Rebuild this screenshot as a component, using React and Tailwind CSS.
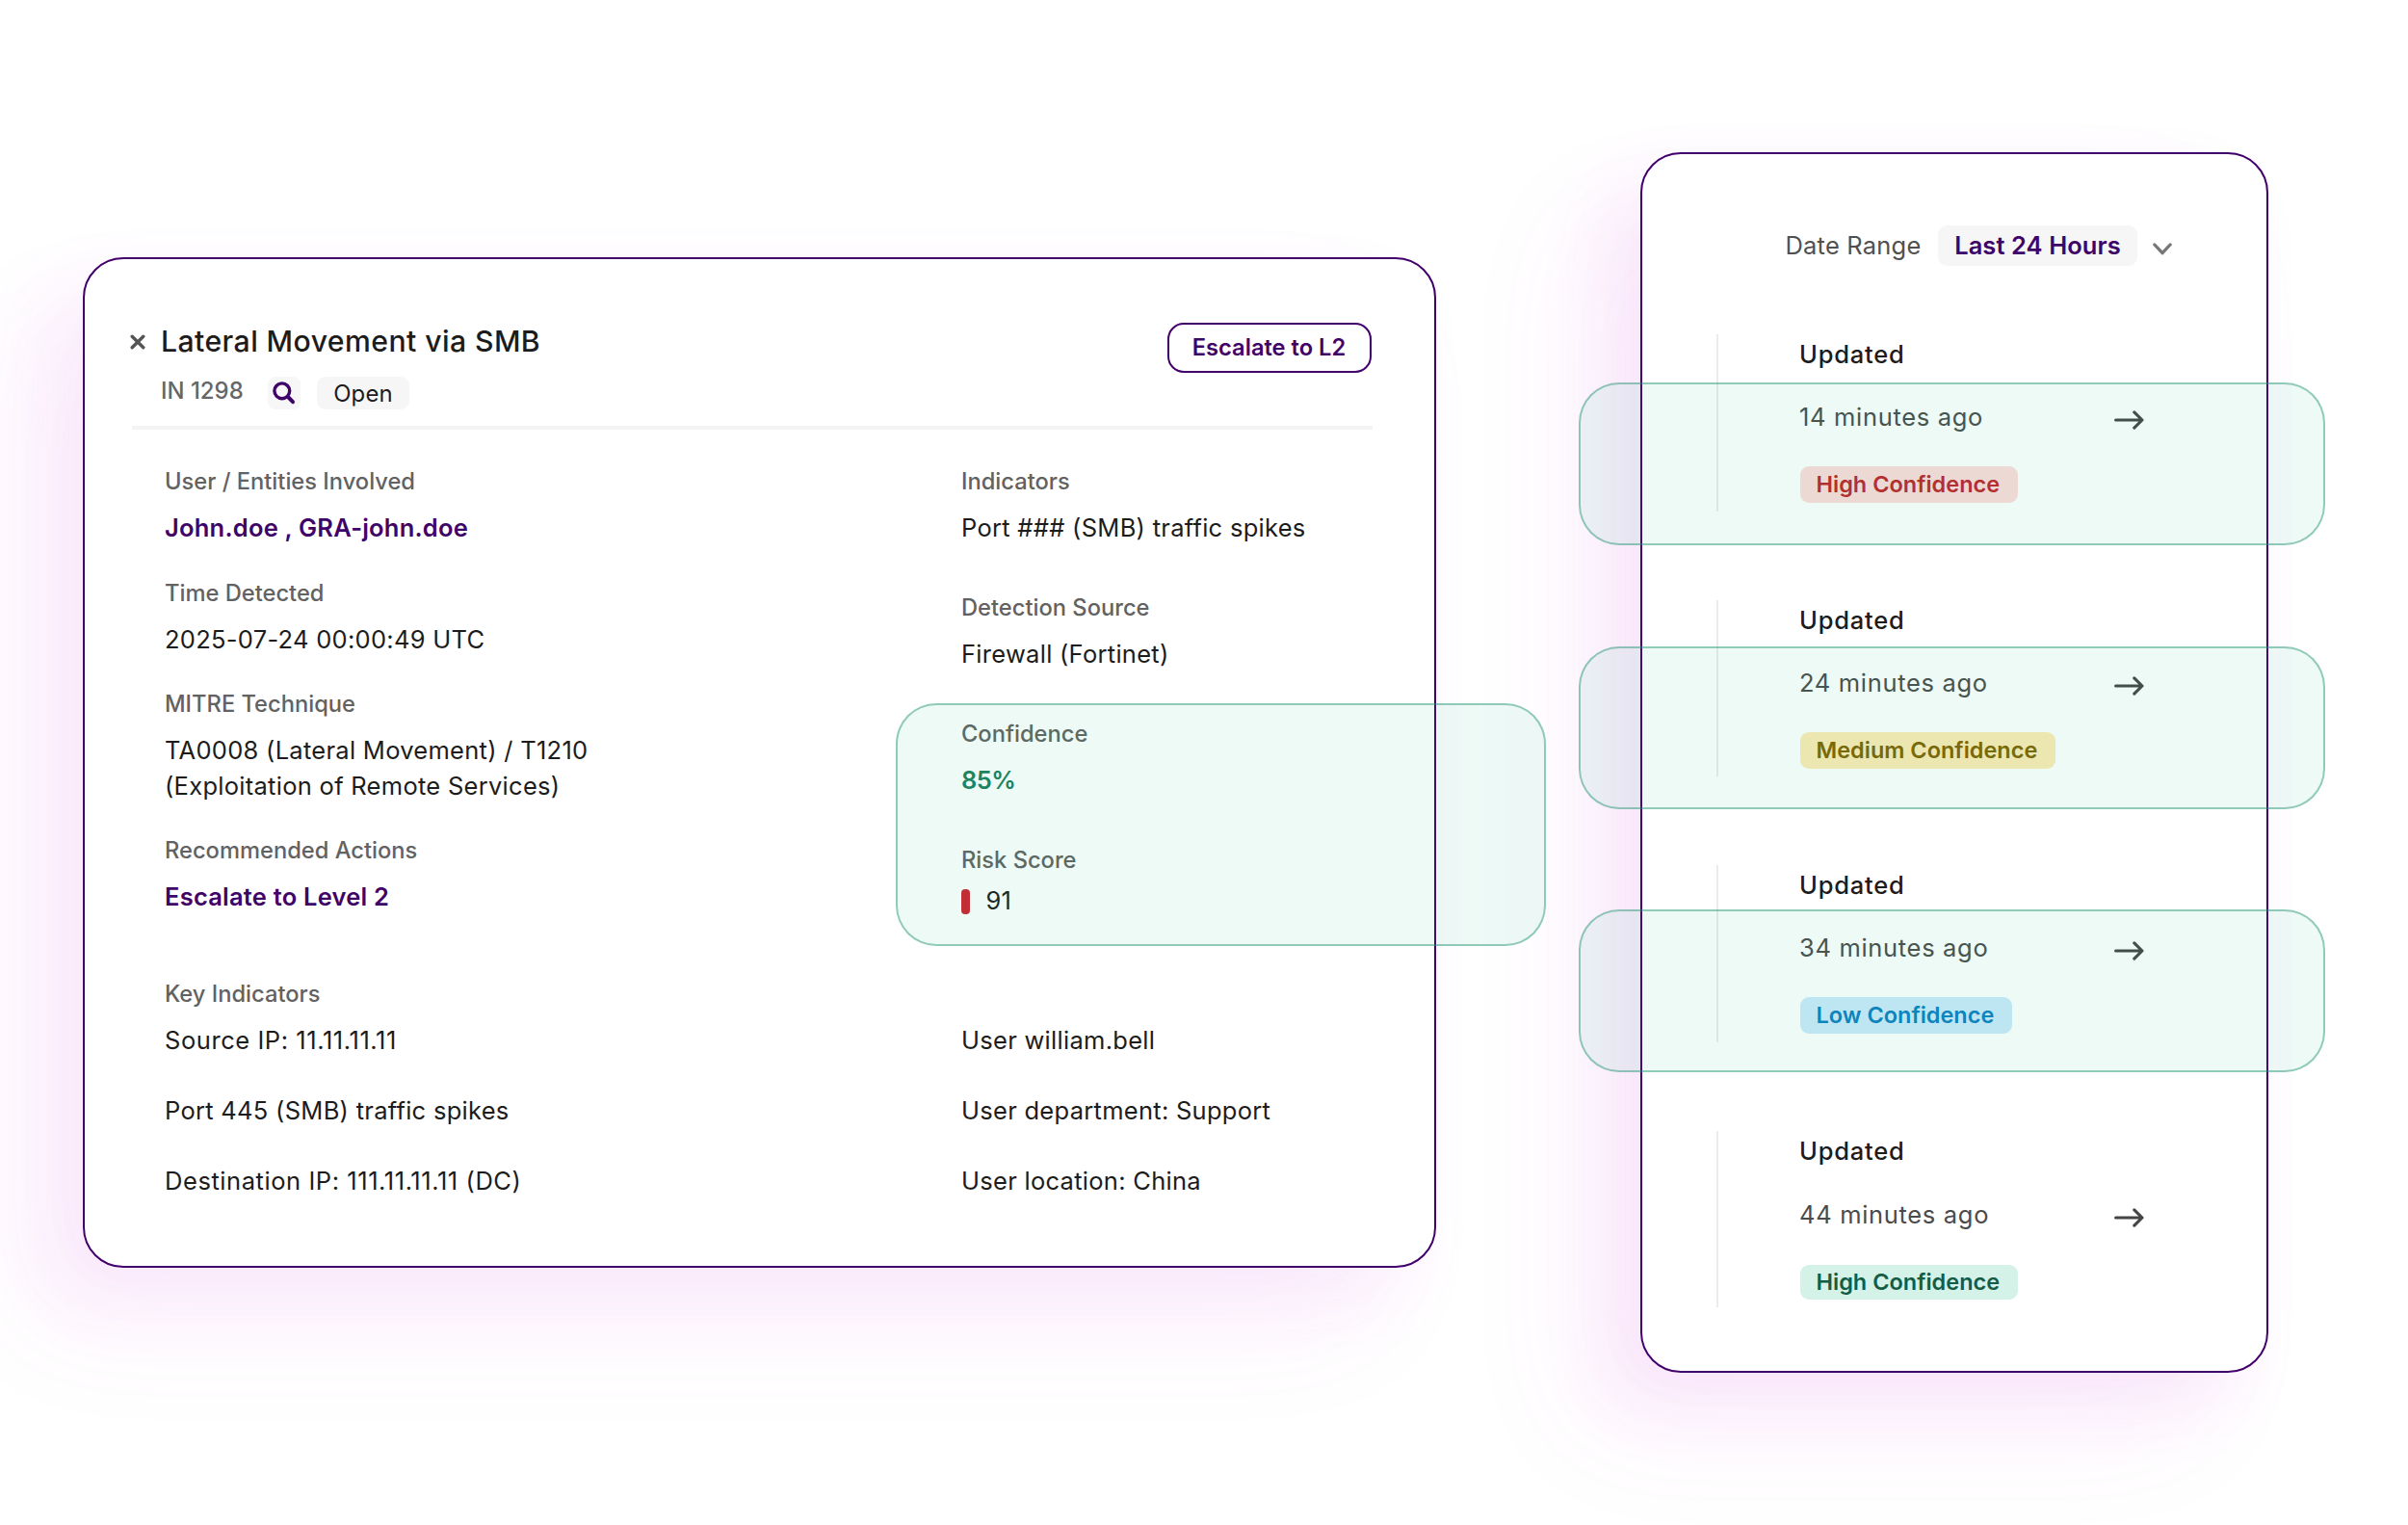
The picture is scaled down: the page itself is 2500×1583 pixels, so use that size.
import React from 'react';

const details = [
  { label: 'User / Entities Involved', value: 'John.doe , GRA-john.doe', tone: 'link' },
  { label: 'Time Detected', value: '2025-07-24 00:00:49 UTC' },
  { label: 'MITRE Technique', value: ['TA0008 (Lateral Movement) / T1210', '(Exploitation of Remote Services)'] },
  { label: 'Recommended Actions', value: 'Escalate to Level 2', tone: 'link' },
];

const signals = [
  { label: 'Indicators', value: 'Port ### (SMB) traffic spikes' },
  { label: 'Detection Source', value: 'Firewall (Fortinet)' },
  { label: 'Confidence', value: '85%', tone: 'good' },
];

const updates = [
  {
    time: '14 minutes ago',
    level: 'High Confidence',
    timeGap: 'mt-[33px]',
    badge: 'mt-[35px] w-[226px] h-[38px] bg-[#ffdcdb] text-[#bf2529]',
  },
  {
    time: '24 minutes ago',
    level: 'Medium Confidence',
    timeGap: 'mt-[33px]',
    badge: 'mt-[35px] w-[265px] h-[38px] bg-[#feebb4] text-[#806200]',
  },
  {
    time: '34 minutes ago',
    level: 'Low Confidence',
    timeGap: 'mt-[33px]',
    badge: 'mt-[35px] w-[220px] h-[38px] bg-[#cde9fb] text-[#0d7fc0]',
  },
  {
    time: '44 minutes ago',
    level: 'High Confidence',
    timeGap: 'mt-[34px]',
    badge: 'mt-[36px] w-[226px] h-[36px] bg-[#d4f2e7] text-[#145c45]',
  },
];

const tones = {
  text: 'font-normal tracking-[0.28px] text-[#1c1c1c]',
  address: 'font-normal tracking-[0.56px] text-[#1c1c1c]',
  link: 'font-semibold tracking-[0.22px] text-[#3f0468]',
  good: 'font-semibold tracking-[-0.6px] text-[#1b7f60]',
};

const Label = ({ children }) => (
  <dt className="text-[23.7px] leading-[32px] font-medium text-[#626262]">{children}</dt>
);

const Value = ({ tone = 'text', children }) => (
  <dd className={`text-[25.5px] leading-[36.5px] ${tones[tone]}`}>{children}</dd>
);

const Field = ({ label, value, tone }) => (
  <div className="flex flex-col">
    <Label>{label}</Label>
    <div className="mt-[14px]">
      {[].concat(value).map((line) => (
        <Value key={line} tone={tone}>{line}</Value>
      ))}
    </div>
  </div>
);

/* Translucent green frame laid over a card */
const Highlight = ({ className }) => (
  <div
    className={`absolute z-10 rounded-[42px] border-2 border-[#1e916e]/45 bg-[#19c08c]/8 pointer-events-none ${className}`}
  />
);

const CloseIcon = () => (
  <svg className="w-[16px] h-[16px]" viewBox="0 0 16 16" fill="none" stroke="#555" strokeWidth="3.4" strokeLinecap="round">
    <path d="M2.2 2.2 13.8 13.8M13.8 2.2 2.2 13.8" />
  </svg>
);

const SearchIcon = () => (
  <svg className="w-[34px] h-[34px]" viewBox="0 0 34 34" fill="none" stroke="#3f0468" strokeLinecap="round">
    <circle cx="14.8" cy="14.8" r="7.9" strokeWidth="3.4" />
    <path d="M21 21 26 26.2" strokeWidth="4" />
  </svg>
);

const ChevronIcon = () => (
  <svg className="w-[20px] h-[13px] mt-[6px]" viewBox="0 0 20 13" fill="none" stroke="#777" strokeWidth="3.3" strokeLinecap="round" strokeLinejoin="round">
    <path d="M1.9 2 10 10.7 18.1 2" />
  </svg>
);

const ArrowIcon = () => (
  <svg className="w-[31px] h-[20px] mt-[6px]" viewBox="0 0 31 20" fill="none" stroke="#454545" strokeWidth="3.1" strokeLinecap="round" strokeLinejoin="round">
    <path d="M1.6 10H29M20.8 1.9 29 10 20.8 18.1" />
  </svg>
);

const IncidentCard = () => (
  <section className="relative ml-[86px] mt-[267px] w-[1405px] h-[1049px] shrink-0 rounded-[42px] border-2 border-[#42006b] bg-white pt-[65px] shadow-[-40px_36px_80px_rgba(205,60,225,0.075),-64px_64px_130px_rgba(225,80,225,0.06)]">
    <header className="ml-[47px] w-[1290px]">
      <div className="flex justify-between">
        <div>
          <div className="flex items-center gap-[16px]">
            <button aria-label="Close"><CloseIcon /></button>
            <h1 className="text-[30.2px] leading-[41px] font-[450] tracking-[0.42px] text-[#1c1c1c]">Lateral Movement via SMB</h1>
          </div>
          <div className="flex items-start mt-[16px] ml-[32px]">
            <span className="w-[111px] text-[23.9px] leading-[30px] font-medium text-[#666]">IN 1298</span>
            <button className="w-[34px] h-[34px] rounded-[8px] bg-[#f7f7f7]" aria-label="Search">
              <SearchIcon />
            </button>
            <span className="ml-[17px] w-[96px] h-[34px] rounded-[9px] bg-[#f6f6f6] text-center text-[23.9px] leading-[35px] tracking-[0.2px] text-[#1c1c1c]">Open</span>
          </div>
        </div>
        <button className="mt-px mr-[1.5px] w-[212px] h-[52px] rounded-[17px] border-2 border-[#42006b] text-[23.7px] leading-none font-semibold text-[#3f0468]">
          Escalate to L2
        </button>
      </div>
      <hr className="ml-[2px] mt-[17px] h-[4px] border-0 bg-[#f4f4f4]" />
    </header>

    <dl className="flex ml-[83px] mt-[38.3px]">
      <div className="flex w-[827px] flex-col gap-[33px]">
        {details.map((item) => <Field key={item.label} {...item} />)}
      </div>
      <div className="flex flex-col gap-[48.5px]">
        {signals.map((item) => <Field key={item.label} {...item} />)}
        <div>
          <Label>Risk Score</Label>
          <div className="flex items-center gap-[16.5px] mt-[8px]">
            <span className="w-[9px] h-[26px] rounded-[4px] bg-[#d0222e]" />
            <Value>91</Value>
          </div>
        </div>
      </div>
    </dl>

    <dl className="flex ml-[83px] mt-[62.4px]">
      <div className="w-[827px]">
        <Label>Key Indicators</Label>
        <div className="flex flex-col gap-[36.4px] mt-[14px]">
          <Value tone="address">Source IP: 11.11.11.11</Value>
          <Value>Port 445 (SMB) traffic spikes</Value>
          <Value tone="address">Destination IP: 111.11.11.11 (DC)</Value>
        </div>
      </div>
      <div className="flex flex-col gap-[36.4px] pt-[46px]">
        <Value>User william.bell</Value>
        <Value>User department: Support</Value>
        <Value>User location: China</Value>
      </div>
    </dl>

    <Highlight className="left-[842px] top-[461px] w-[675px] h-[252px]" />
  </section>
);

const UpdateItem = ({ time, level, timeGap, badge }) => (
  <li className="h-[183.5px] border-l-2 border-[#ebebeb] pl-[84px] pt-[5px]">
    <p className="text-[25.5px] leading-[32px] font-medium tracking-[0.8px] text-[#1c1c1c]">Updated</p>
    <div className={`flex w-[358px] h-[32px] items-center justify-between ${timeGap}`}>
      <span className="text-[25.5px] leading-[32px] tracking-[0.68px] text-[#4b4b4b]">{time}</span>
      <ArrowIcon />
    </div>
    <span className={`flex ml-[0.5px] items-center rounded-[9px] pl-[17px] text-[23.5px] leading-none font-semibold whitespace-nowrap ${badge}`}>
      {level}
    </span>
  </li>
);

const UpdatesCard = () => (
  <section className="relative ml-[212px] mt-[158px] w-[652px] h-[1267px] shrink-0 rounded-[42px] border-2 border-[#42006b] bg-white pt-[74px] shadow-[-36px_34px_74px_rgba(205,60,220,0.09),-70px_64px_130px_rgba(225,80,225,0.06)]">
    <div className="flex h-[42px] items-center pl-[148.5px]">
      <span className="w-[158.5px] text-[25.5px] tracking-[0.2px] text-[#505050]">Date Range</span>
      <span className="flex w-[207px] h-[42px] items-center justify-center rounded-[9px] bg-[#f6f6f6] text-[25.5px] font-semibold tracking-[0.08px] text-[#3f0468]">
        Last 24 Hours
      </span>
      <span className="ml-[16px]"><ChevronIcon /></span>
    </div>
    <ul className="flex flex-col gap-[92px] ml-[77px] mt-[71px]">
      {updates.map((item) => <UpdateItem key={item.time} {...item} />)}
    </ul>

    <Highlight className="left-[-66px] top-[237px] w-[775px] h-[169px]" />
    <Highlight className="left-[-66px] top-[510.5px] w-[775px] h-[169px]" />
    <Highlight className="left-[-66px] top-[784px] w-[775px] h-[169px]" />
  </section>
);

export default function App() {
  return (
    <main className="flex w-[2500px] h-[1583px] items-start overflow-hidden bg-white font-['Inter',sans-serif]">
      <IncidentCard />
      <UpdatesCard />
    </main>
  );
}
